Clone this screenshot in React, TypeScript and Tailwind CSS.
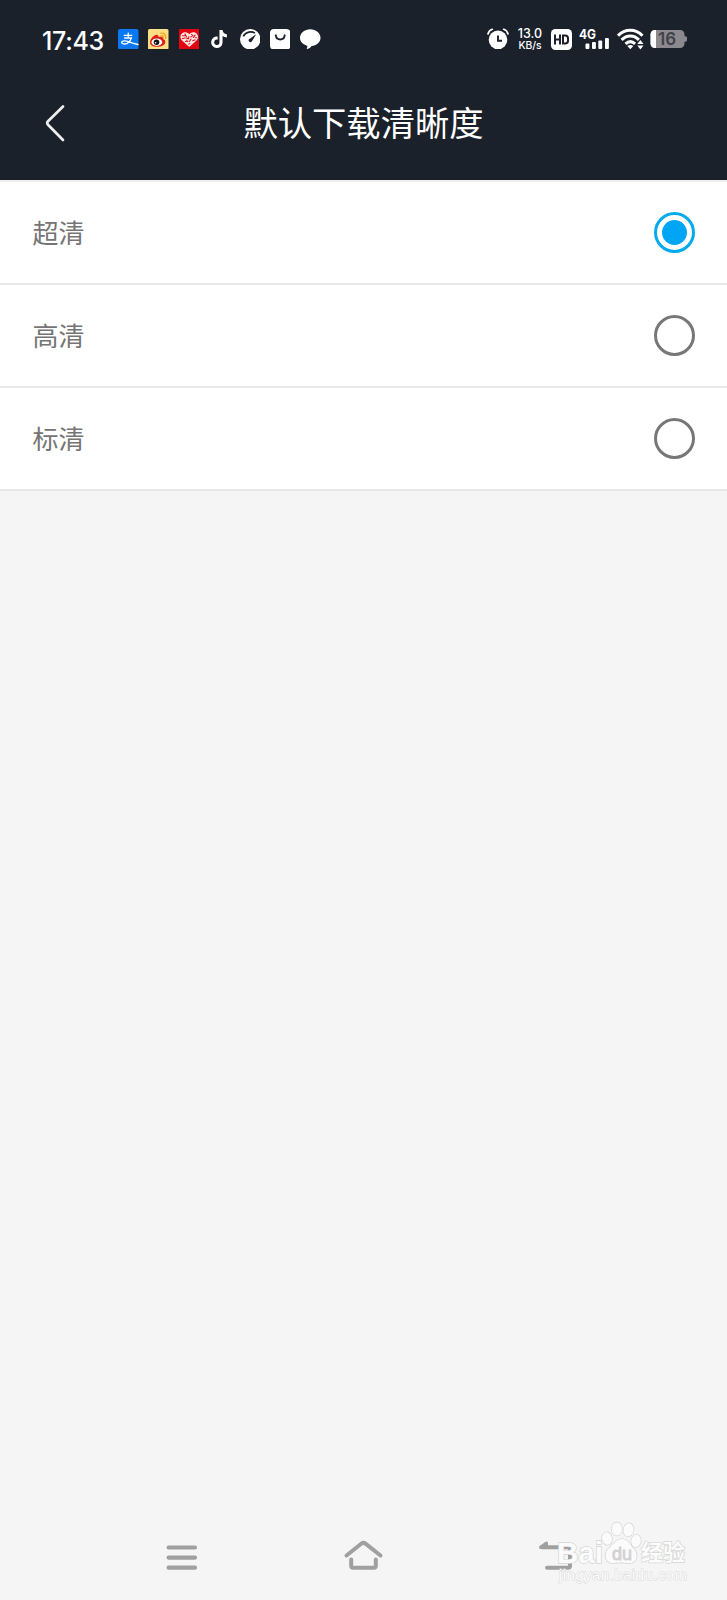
import React, { useState } from "react";
import { FaTiktok } from "react-icons/fa6";

const options = ["超清", "高清", "标清"];

const AppIcons = () => (
  <div className="flex h-5 items-center gap-[9.900px]">
    <svg className="h-[20.5px] w-[20.5px]" viewBox="0 0 20 20">
      <rect width="20" height="20" rx="2" fill="#0878f4" />
      <g fill="none" stroke="#fff" strokeLinecap="round">
        <path d="M6 6.200h7.500M10 4v4" strokeWidth="1.300" />
        <path d="M6.500 8.800h6.500c-1 3-3.600 5.800-6.500 5.800-3.500 0-4-2.800-.5-3 3.400-.1 6.500 2 13.500 3.500" strokeWidth="1.300" />
      </g>
    </svg>
    <svg className="h-[20.5px] w-[20.5px]" viewBox="0 0 20 20">
      <rect width="20" height="20" rx="1.500" fill="#ffdf83" />
      <path d="M2 13.200C2 9.500 6.600 5 9.300 5.800c1.200.4 1 1.500.8 2.300 2-.9 5.500-.6 4.800 1.900 1.600.4 2.300 1.800 1.900 3.300-1.300 5-14.800 5.700-14.800-.1z" fill="#df1d18" />
      <ellipse cx="8.600" cy="12.900" rx="5.200" ry="3.600" fill="#fff" />
      <circle cx="8.300" cy="13" r="2.700" fill="#151515" />
      <circle cx="7.400" cy="13.400" r=".8" fill="#fff" />
      <path d="M12.600 4.200c3.300-.6 5.400 1.900 4.600 5M12.700 6.600c1.700-.2 2.500.8 2.200 2.200" fill="none" stroke="#f5a126" strokeWidth="1.300" strokeLinecap="round" />
    </svg>
    <svg className="h-[20.5px] w-[20.5px]" viewBox="0 0 20 20">
      <rect width="20" height="20" rx="1" fill="#e30510" />
      <path d="M10 17.500 2.700 11C-.2 7.500 2.500 3 6 3.200c2 0 3.300 1 4 2 .7-1 2-2 4-2 3.500-.2 6.200 4.300 3.300 7.800z" fill="#ffe9e6" />
      <path d="M3 6.500h3.500M5.500 4.500l2 3M9.500 7v3M12 5l2 2M16 5.500l-2 3M3 9.500l3.500-1M7 10.500l2 2M12 9.500l-2 3M13 11.500l3-1M6 12.500l2-1M9 15l2-1M15.500 8.500h2M11 7.500h2M7 8.500l2 1" stroke="#e30510" strokeWidth="1" />
    </svg>
    <div className="flex h-[20.5px] w-[20.5px] items-center justify-center">
      <FaTiktok size={18} />
    </div>
    <svg className="h-[20.5px] w-[20.5px]" viewBox="0 0 20 20">
      <circle cx="10" cy="10" r="10" fill="#fff" />
      <path d="M3.200 7.200C5.500 2.400 11.400 1.800 14.500 4" fill="none" stroke="#1c212b" strokeWidth="1.700" />
      <path d="m15.800 5-4.300 7.200c-1.200 1.600-3.900.1-3-1.900z" fill="#1c212b" />
    </svg>
    <svg className="h-[20.5px] w-[20.5px]" viewBox="0 0 20 20">
      <rect width="20" height="20" rx="4" fill="#fff" />
      <path d="M5.700 6.200c.7 5.300 7.900 5.300 8.600 0" fill="none" stroke="#1c212b" strokeWidth="1.900" strokeLinecap="round" />
    </svg>
    <svg className="h-[20.5px] w-[20.5px]" viewBox="0 0 20 20">
      <path d="M10 .3c5.500 0 10 3.700 10 8.300 0 4.400-4 7.600-9 8.200-.9 1.600-2.400 2.500-4.700 2.900.7-.9 1-2 .8-3.300C2.900 15.300 0 12.300 0 8.600 0 4 4.500.3 10 .3z" fill="#fff" />
    </svg>
  </div>
);

const SystemIcons = () => (
  <div className="flex h-5 items-center">
    <svg className="h-[22px] w-[22px]" viewBox="0 0 22 22">
      <circle cx="11" cy="11.800" r="9.300" fill="#fff" />
      <path d="M1 6c.5-2.300 2-4 4.300-4.700M21 6c-.5-2.300-2-4-4.300-4.700" fill="none" stroke="#fff" strokeWidth="1.700" strokeLinecap="round" />
      <path d="M11 7.500v5.300h4" fill="none" stroke="#1c212b" strokeWidth="1.900" />
    </svg>
    <div className="ml-2 flex w-[26px] flex-col items-center font-['Inter'] font-medium">
      <span className="text-[12.500px] leading-[12px]">13.0</span>
      <span className="text-[10.300px] leading-[10px]">KB/s</span>
    </div>
    <svg className="ml-2 h-[21px] w-[21px]" viewBox="0 0 21 21">
      <rect width="21" height="21" rx="4.500" fill="#fff" />
      <path d="M4 5.500v10M9 5.500v10M4 10.500h5M12 6.500h2.200c1.800 0 2.800 1 2.800 2.800v2.400c0 1.800-1 2.800-2.800 2.800H12z" fill="none" stroke="#1c212b" strokeWidth="2" />
    </svg>
    <svg className="ml-[7px] h-[22px] w-[31px] overflow-visible" viewBox="0 0 31 22">
      <text x="0" y="11" fill="#fff" fontFamily="Inter" fontSize="13" fontWeight="700" textLength="17" lengthAdjust="spacingAndGlyphs">4G</text>
      <g fill="#fff">
        <rect x="6.500" y="15.500" width="3.900" height="5.500" rx="1" />
        <rect x="13" y="14" width="3.900" height="7" rx="1" />
        <rect x="19.300" y="12.500" width="3.900" height="8.500" rx="1" />
        <rect x="26" y="10" width="3.900" height="11" rx="1" />
      </g>
    </svg>
    <svg className="ml-[7px] h-[22px] w-7" viewBox="0 0 28 22">
      <g fill="none" stroke="#fff" strokeWidth="3">
        <path d="M1 7.700c7-7.300 17.500-7.300 24.500 0" />
        <path d="M4.600 11.900c5.200-5.200 12.200-5.200 17.300 0" />
        <path d="M8.500 15.900c3.200-2.900 6.500-2.900 9.600 0" />
      </g>
      <path d="M10.300 18c2-1.500 4-1.500 6 0l-3 3.200zM20.300 16l3.100-4 3.100 4zM20.300 17.500h6.200l-3.100 4z" fill="#fff" />
    </svg>
    <svg className="ml-[5px] h-[18px] w-[37px] overflow-visible" viewBox="0 0 37 18">
      <path d="M5 0h25c2.800 0 4.500 1.800 4.500 4.500v1.800h1c1 0 1.500.8 1.500 1.700v2c0 .9-.5 1.700-1.500 1.700h-1v1.800c0 2.700-1.700 4.500-4.500 4.500H5c-2.800 0-4.500-1.800-4.500-4.500v-9C.5 1.800 2.200 0 5 0z" fill="#8b898e" />
      <path d="M6 0v18H5C2.200 18 .5 16.200.5 13.500v-9C.5 1.800 2.200 0 5 0z" fill="#fff" />
      <text x="17" y="15.200" textAnchor="middle" fill="#40424a" fontFamily="Inter" fontSize="17" fontWeight="600">16</text>
    </svg>
  </div>
);

const Watermark = () => (
  <svg className="pointer-events-none absolute top-[1510px] left-[527px] h-[85px] w-[180px]" viewBox="0 0 180 85">
    <g fill="#fbfbfb" stroke="#d6d6d6" strokeWidth="1.400" paintOrder="stroke">
      <text x="30" y="52.500" fontFamily="Liberation Sans" fontWeight="700" fontSize="29" textLength="46" lengthAdjust="spacingAndGlyphs">Bai</text>
      <ellipse cx="80" cy="28.500" rx="5" ry="6.300" transform="rotate(-12 80 28.500)" />
      <ellipse cx="89.800" cy="19" rx="5.200" ry="6.600" />
      <ellipse cx="101.500" cy="19.800" rx="5" ry="6.600" transform="rotate(8 101.500 19.800)" />
      <ellipse cx="109" cy="31" rx="4.800" ry="6.200" transform="rotate(12 109 31)" />
      <path d="M95 29c6 0 8 6 12 10 4 4 4 14-4 14-5 0-11-1-16 0-8 1-11-8-6-14 5-4 8-10 14-10z" />
      <text x="114" y="49.500" fontFamily="'Noto Sans CJK SC', sans-serif" fontSize="22" fontWeight="700">经验</text>
    </g>
    <text x="85" y="50" fontFamily="Liberation Sans" fontSize="18" fill="#d2d2d2" stroke="#d2d2d2" strokeWidth=".9" textLength="20">du</text>
    <text x="32" y="70" fontFamily="Liberation Sans" fontSize="15" fill="#fbfbfb" stroke="#dadada" strokeWidth="1" paintOrder="stroke" textLength="128">jingyan.baidu.com</text>
  </svg>
);

const App = () => {
  const [selected, setSelected] = useState(0);

  return (
    <main className="relative flex h-[1600px] w-[727px] flex-col overflow-hidden bg-[#f5f5f5] font-['Noto_Sans_CJK_SC',sans-serif]">
      <header className="h-[180px] shrink-0 bg-[#1b212b] text-white">
        <div className="flex h-[78px] items-center pr-10 pl-[42px]">
          <span className="w-[76px] pt-1 font-['Inter'] text-[25px] leading-8 font-medium tracking-[-0.3px]">17:43</span>
          <AppIcons />
          <div className="ml-auto">
            <SystemIcons />
          </div>
        </div>
        <div className="grid h-[90px] grid-cols-[90px_1fr_90px] items-center">
          <button className="pl-[45px]">
            <svg className="h-[38px] w-5" viewBox="0 0 20 38" fill="none" stroke="#eee" strokeWidth="2.700" strokeLinecap="round">
              <path d="M18 2.500 3 17.300q-1.700 1.700 0 3.400L18 36" />
            </svg>
          </button>
          <h1 className="pb-1 text-center text-[34.300px] leading-[50px]">默认下载清晰度</h1>
        </div>
      </header>

      <section className="border-t-2 border-[#f0f0f0] bg-white">
        {options.map((item, index) => (
          <button
            key={item}
            className="flex h-[103px] w-full items-center justify-between border-b-2 border-[#e8e8e8] pr-8 pl-8"
            onClick={() => setSelected(index)}
          >
            <span className="pb-px pl-[0.5px] text-[26px] leading-[38px] text-[#757575]">{item}</span>
            {selected === index ? (
              <span className="flex h-[41px] w-[41px] items-center justify-center rounded-full border-3 border-[#05aaeb]">
                <span className="h-[25px] w-[25px] rounded-full bg-[#00a6f5]"></span>
              </span>
            ) : (
              <span className="h-[41px] w-[41px] rounded-full border-3 border-[#777]"></span>
            )}
          </button>
        ))}
      </section>

      <nav className="mt-auto flex h-[62px] items-start pl-[166px]">
        <svg className="mt-1 h-8 w-8" viewBox="0 0 32 32" stroke="#a0a0a0" strokeWidth="4.200" strokeLinecap="round">
          <path d="M2.600 5.500h26.400M2.600 15.600h26.400M2.600 25.700h26.400" />
        </svg>
        <svg className="ml-[145px] h-9 w-[41px]" viewBox="0 0 41 36" fill="none" stroke="#a0a0a0" strokeWidth="4" strokeLinecap="round" strokeLinejoin="round">
          <path d="m3.500 17.500 14.700-11.700q2.300-1.800 4.600 0l14.700 11.700M8.200 21.500v6.300q0 1.900 1.900 1.900h20.800q1.900 0 1.900-1.900v-6.300" />
        </svg>
        <svg className="ml-[154px] h-9 w-9" viewBox="0 0 36 36" fill="none" stroke="#a0a0a0" strokeWidth="4" strokeLinecap="round" strokeLinejoin="round">
          <path d="M4 9.300h26q2 0 2 2v16.500q0 2-2 2H9" />
          <path d="M2.500 9.200 8.500 5v4.500z" strokeWidth="3" fill="#a0a0a0" />
        </svg>
      </nav>
      <Watermark />
    </main>
  );
};

export default App;
